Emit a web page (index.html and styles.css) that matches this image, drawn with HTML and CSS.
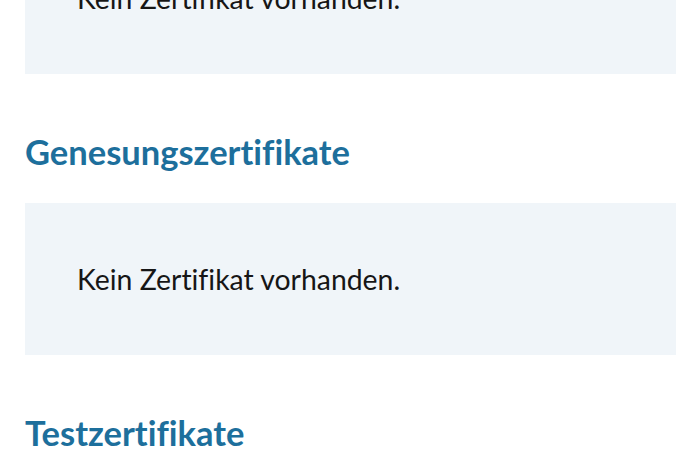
FILE: index.html
```html
<!DOCTYPE html>
<html lang="de">
<head>
    <meta charset="UTF-8">
    <meta name="viewport" content="width=device-width, initial-scale=1.0">
    <title>Zertifikate</title>
    <link rel="stylesheet" href="styles.css">
</head>
<body>

    <!-- Certificate list (scrolled) -->
    <main class="cert-list">
        <div class="cert-box">
            <p>Kein Zertifikat vorhanden.</p>
        </div>

        <h2 class="cert-title">Genesungszertifikate</h2>
        <div class="cert-box">
            <p>Kein Zertifikat vorhanden.</p>
        </div>

        <h2 class="cert-title">Testzertifikate</h2>
    </main>

</body>
</html>
```
FILE: styles.css
```css
/* General page styles */
body, html {
    background-color: #ffffff;
    font-family: 'Lato', 'Open Sans', sans-serif;
    font-variant-ligatures: none;
    margin: 0;
    padding: 0;
    overflow: hidden;
}

/* List of certificate sections, scrolled a little */
.cert-list {
    margin-top: -78px;
    padding: 0 24px 0 25px;
}

/* Grey-blue box */
.cert-box {
    background-color: #f0f5f9;
    height: 152px;
    padding: 0 52px;
    box-sizing: border-box;
    display: flex;
    align-items: center;
}

.cert-box p {
    margin: 0;
    font-size: 28.4px;
    color: #161616;
}

/* Section heading */
.cert-title {
    color: #1d6f9c;
    font-size: 34.5px;
    font-weight: 700;
    line-height: 40px;
    margin: 58px 0 31px;
}
```
